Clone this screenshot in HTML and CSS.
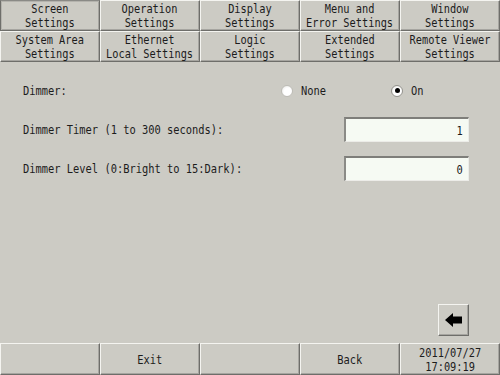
FILE: index.html
```html
<!DOCTYPE html>
<html lang="en">
<head>
<meta charset="utf-8">
<title>Screen Settings</title>
<link rel="stylesheet" href="styles.css">
</head>
<body>
<div class="screen">
  <nav class="tabs">
    <div class="tab sel"><span class="t two">Screen<br>Settings</span></div>
    <div class="tab"><span class="t two">Operation<br>Settings</span></div>
    <div class="tab"><span class="t two">Display<br>Settings</span></div>
    <div class="tab"><span class="t two">Menu and<br>Error Settings</span></div>
    <div class="tab"><span class="t two">Window<br>Settings</span></div>
    <div class="tab"><span class="t two">System Area<br>Settings</span></div>
    <div class="tab"><span class="t two">Ethernet<br>Local Settings</span></div>
    <div class="tab"><span class="t two">Logic<br>Settings</span></div>
    <div class="tab"><span class="t two">Extended<br>Settings</span></div>
    <div class="tab"><span class="t two">Remote Viewer<br>Settings</span></div>
  </nav>
  <main class="content">
    <div class="row">
      <span class="label"><span class="t tl">Dimmer:</span></span>
      <div class="radios">
        <span class="opt"><span class="radio"></span><span class="t tl">None</span></span>
        <span class="opt"><span class="radio on"></span><span class="t tl">On</span></span>
      </div>
    </div>
    <div class="row">
      <span class="label"><span class="t tl">Dimmer Timer (1 to 300 seconds):</span></span>
      <div class="field"><span class="t tr">1</span></div>
    </div>
    <div class="row">
      <span class="label"><span class="t tl">Dimmer Level (0:Bright to 15:Dark):</span></span>
      <div class="field"><span class="t tr">0</span></div>
    </div>
    <div class="grow"></div>
    <div class="nav-row">
      <div class="arrow-btn">
        <svg width="17" height="14" viewBox="0 0 17 14"><polygon points="0,7 8,0 8,3.5 17,3.5 17,10.5 8,10.5 8,14" fill="#000"/></svg>
      </div>
    </div>
  </main>
  <footer class="bar">
    <div class="btn"></div>
    <div class="btn"><span class="t">Exit</span></div>
    <div class="btn"></div>
    <div class="btn"><span class="t">Back</span></div>
    <div class="btn date"><span class="t two">2011/07/27<br>17:09:19</span></div>
  </footer>
</div>
</body>
</html>
```
FILE: styles.css
```css
* { box-sizing: border-box; }
html, body { margin: 0; padding: 0; }
body {
  width: 500px;
  height: 375px;
  background: #cccbc4;
  font-family: "DejaVu Sans Mono", "Liberation Mono", monospace;
  font-size: 13px;
  color: #1c1c1c;
  overflow: hidden;
}
.screen {
  width: 500px;
  height: 375px;
  display: flex;
  flex-direction: column;
}
.t {
  display: inline-block;
  white-space: nowrap;
  transform: scaleX(0.8);
  transform-origin: center center;
}
.t.two {
  font-size: 12px;
  line-height: 14px;
  transform: scaleX(0.86);
}
.tl { transform-origin: left center; }
.tr { transform-origin: right center; }

.tabs {
  display: grid;
  grid-template-columns: repeat(5, 100px);
  grid-template-rows: 31px 31px;
}
.tab, .btn {
  display: flex;
  align-items: center;
  justify-content: center;
  text-align: center;
  background: #cccbc4;
  border-top: 1px solid #f4f4f0;
  border-left: 1px solid #f4f4f0;
  border-right: 1px solid #6e6e6a;
  border-bottom: 1px solid #6e6e6a;
  box-shadow: inset -1px -1px 0 #a6a5a0;
}
.tab.sel {
  border-top-color: #8a8a86;
  border-left-color: #6e6e6a;
  box-shadow: inset 1px 1px 0 #b4b3ad, inset -1px -1px 0 #a6a5a0;
}

.content {
  flex: 1;
  display: flex;
  flex-direction: column;
  gap: 14px;
  padding: 16px 31px 0 23px;
}
.row {
  height: 25px;
  display: flex;
  align-items: center;
}
.label { flex: 1; }
.radios {
  width: 188px;
  display: flex;
  align-items: center;
}
.opt {
  display: flex;
  align-items: center;
  gap: 8px;
}
.opt:first-child { width: 110px; }
.radio {
  width: 12px;
  height: 12px;
  border-radius: 50%;
  background: radial-gradient(circle at 60% 60%, #ffffff 45%, #e2e2de 100%);
  border: 1px solid #bdbcb6;
  display: flex;
  align-items: center;
  justify-content: center;
}
.radio.on { border-color: #94938e; }
.radio.on::after {
  content: "";
  width: 5px;
  height: 5px;
  border-radius: 50%;
  background: #000;
}
.field {
  width: 125px;
  height: 25px;
  background: #f6faf3;
  border-top: 2px solid #7e7e7a;
  border-left: 2px solid #8a8a86;
  border-right: 1px solid #ecece8;
  border-bottom: 1px solid #ecece8;
  display: flex;
  align-items: center;
  justify-content: flex-end;
  padding-right: 5px;
}
.grow { flex: 1; }
.nav-row {
  display: flex;
  justify-content: flex-end;
  margin-top: -14px;
  margin-bottom: 7px;
}
.arrow-btn {
  width: 31px;
  height: 32px;
  background: #cccbc4;
  border-top: 1px solid #f4f4f0;
  border-left: 1px solid #f4f4f0;
  border-right: 1px solid #6e6e6a;
  border-bottom: 1px solid #6e6e6a;
  box-shadow: inset -1px -1px 0 #a6a5a0;
  display: flex;
  align-items: center;
  justify-content: center;
}
.bar {
  display: grid;
  grid-template-columns: repeat(5, 100px);
  height: 32px;
}
.date { padding-top: 1px; }
```
